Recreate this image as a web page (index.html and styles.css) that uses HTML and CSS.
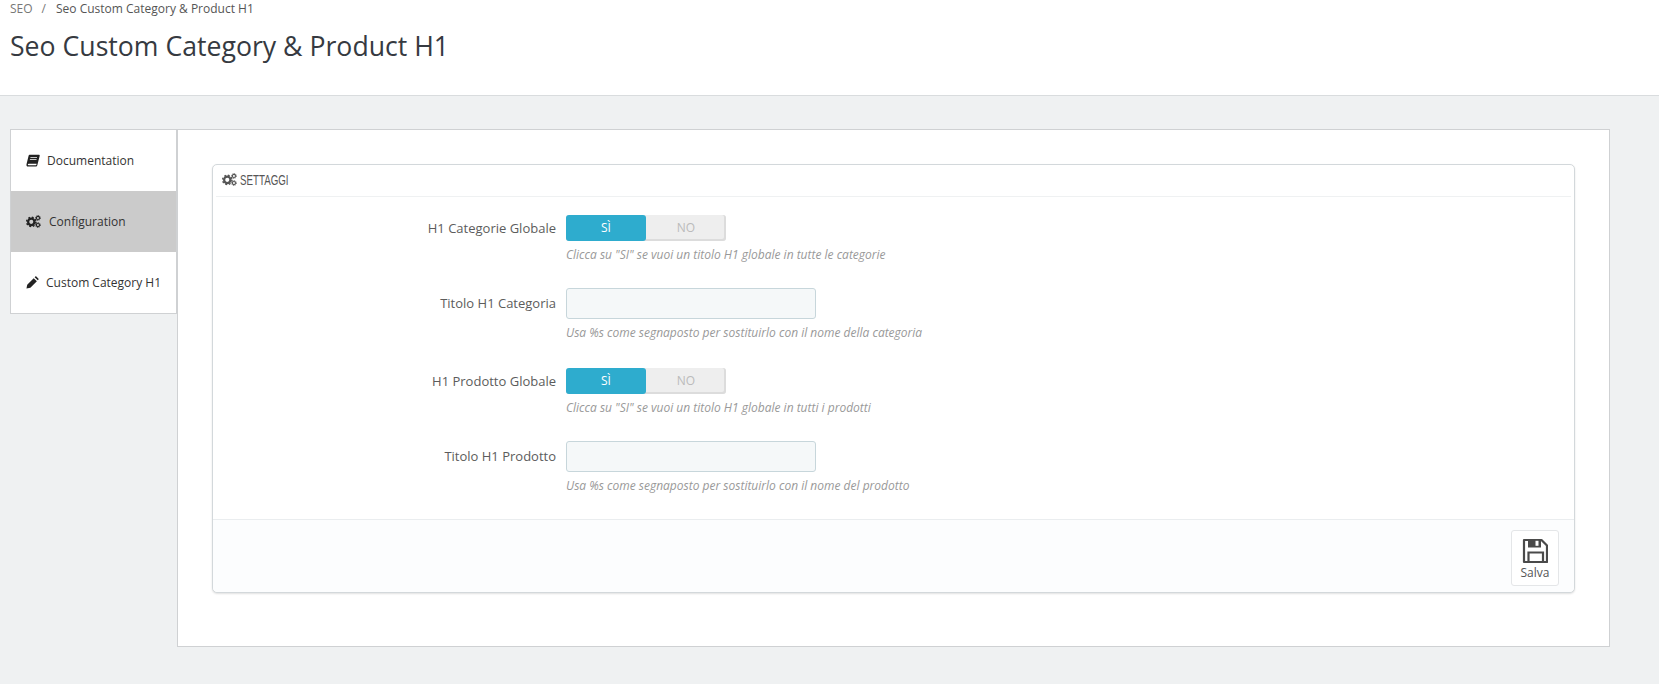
FILE: index.html
```html
<!DOCTYPE html>
<html lang="it">
<head>
<meta charset="utf-8">
<title>Seo Custom Category &amp; Product H1</title>
<link rel="stylesheet" href="styles.css">
</head>
<body>
<svg class="defs" width="0" height="0" aria-hidden="true">
  <symbol id="cogs" viewBox="0 0 16 14">
    <circle cx="5.6" cy="7.4" r="3.4" fill="none" stroke="currentColor" stroke-width="2.4"/>
    <circle cx="5.6" cy="7.4" r="5" fill="none" stroke="currentColor" stroke-width="1.6" stroke-dasharray="2 1.93"/>
    <circle cx="12.8" cy="3.2" r="1.7" fill="none" stroke="currentColor" stroke-width="1.2"/>
    <circle cx="12.8" cy="3.2" r="2.6" fill="none" stroke="currentColor" stroke-width="1" stroke-dasharray="1.1 0.94"/>
    <circle cx="12.8" cy="10.8" r="1.7" fill="none" stroke="currentColor" stroke-width="1.2"/>
    <circle cx="12.8" cy="10.8" r="2.6" fill="none" stroke="currentColor" stroke-width="1" stroke-dasharray="1.1 0.94"/>
  </symbol>
</svg>
<header class="page-head">
  <div class="crumbs"><span class="crumb-root">SEO</span><span class="crumb-sep">/</span><span class="crumb-cur">Seo Custom Category &amp; Product H1</span></div>
  <h1 class="title">Seo Custom Category &amp; Product H1</h1>
</header>
<div class="content">
  <nav class="tabs">
    <a class="tab">
      <svg class="tab-icon book" viewBox="0 0 14 14"><path fill="currentColor" fill-rule="evenodd" d="M3.6 .8H13.200l.6.8-2.500 9.600c-.2.8-.7 1.300-1.600 1.300H2c-1.100 0-1.800-.9-1.500-2.300L2.600 1.800c.1-.6.5-1 1-1zM4.500 3.200l-.2.8h6.600l.2-.8zM4 5.200l-.2.8h6.600l.2-.8zM2.700 9.800c-.6 0-.9.300-.9.700s.3.700.9.700h7.100c.3 0 .5-.2.6-.5l.2-.9z"/></svg>
      <span>Documentation</span>
    </a>
    <a class="tab active">
      <svg class="tab-icon cogs"><use href="#cogs"/></svg>
      <span>Configuration</span>
    </a>
    <a class="tab">
      <svg class="tab-icon pencil" viewBox="0 0 14 14"><path fill="currentColor" d="M8.300 2.300l3.400 3.400-7 7-4.200.8.800-4.200zM9.300 1.300l.6-.6c.4-.4 1-.4 1.400 0l2 2c.4.400.4 1 0 1.400l-.6.600z"/></svg>
      <span>Custom Category H1</span>
    </a>
  </nav>
  <main class="main">
    <section class="panel">
      <div class="panel-head"><svg class="head-icon"><use href="#cogs"/></svg><span class="head-text">SETTAGGI</span></div>
      <div class="form">
        <div class="row row-switch">
          <label class="label">H1 Categorie Globale</label>
          <div class="control">
            <div class="switch"><span class="on">SÌ</span><span class="off">NO</span></div>
            <p class="help">Clicca su "SI" se vuoi un titolo H1 globale in tutte le categorie</p>
          </div>
        </div>
        <div class="row row-input">
          <label class="label">Titolo H1 Categoria</label>
          <div class="control">
            <input class="text" type="text">
            <p class="help">Usa %s come segnaposto per sostituirlo con il nome della categoria</p>
          </div>
        </div>
        <div class="row row-switch">
          <label class="label">H1 Prodotto Globale</label>
          <div class="control">
            <div class="switch"><span class="on">SÌ</span><span class="off">NO</span></div>
            <p class="help">Clicca su "SI" se vuoi un titolo H1 globale in tutti i prodotti</p>
          </div>
        </div>
        <div class="row row-input row-last">
          <label class="label">Titolo H1 Prodotto</label>
          <div class="control">
            <input class="text" type="text">
            <p class="help">Usa %s come segnaposto per sostituirlo con il nome del prodotto</p>
          </div>
        </div>
      </div>
      <div class="panel-foot">
        <button class="save" type="button">
          <svg class="save-icon" viewBox="0 0 26 26"><path fill="none" stroke="currentColor" stroke-width="2.200" stroke-linejoin="round" d="M2 2h17.500L25 7.500V24H2z"/><path fill="currentColor" d="M6 1h13v8.500H6z"/><path fill="#fff" d="M13.500 2.800h3v5h-3z"/><path fill="none" stroke="currentColor" stroke-width="2.200" d="M6.500 24v-9.500h14.500V24"/></svg>
          <span>Salva</span>
        </button>
      </div>
    </section>
  </main>
</div>
</body>
</html>
```
FILE: styles.css
```css
* { box-sizing: border-box; }
html, body { margin: 0; padding: 0; }
body {
  height: 684px;
  overflow: hidden;
  background: #eff1f2;
  font-family: "Open Sans", "Liberation Sans", sans-serif;
  font-size: 12px;
  color: #555;
}
.defs { position: absolute; }
.page-head {
  height: 96px;
  background: #fff;
  border-bottom: 1px solid #d9dcde;
  padding: 0 10px;
}
.crumbs {
  display: flex;
  height: 18px;
  align-items: center;
  font-size: 12px;
  line-height: 18px;
  color: #555;
}
.crumb-root { color: #777; }
.crumb-sep { color: #777; margin: 0 10px 0 9px; }
.title {
  margin: 8px 0 0;
  font-size: 26.650px;
  line-height: 40px;
  font-weight: 400;
  color: #363a41;
}
.content {
  display: flex;
  align-items: flex-start;
  padding: 33px 0 0 10px;
}
.tabs {
  width: 167px;
  flex: none;
  background: #fff;
  border: 1px solid #cfd1d3;
  display: flex;
  flex-direction: column;
}
.tab {
  height: 61px;
  display: flex;
  align-items: center;
  padding-left: 15px;
  gap: 8px;
  color: #333;
  font-size: 12px;
}
.tab.active { background: #cbcbcb; }
.tab-icon { flex: none; color: #222; }
.book { width: 14px; height: 14px; margin-right: -1px; }
.cogs { width: 15px; height: 13px; }
.pencil { width: 13px; height: 13px; margin-right: -1px; }
.main {
  width: 1433px;
  height: 518px;
  flex: none;
  background: #fff;
  border: 1px solid #cfd1d3;
  padding: 34px 34px 0 34px;
}
.panel {
  width: 1363px;
  height: 429px;
  background: #fff;
  border: 1px solid #d3d8db;
  border-radius: 5px;
  box-shadow: 0 1px 2px rgba(0,0,0,.12);
  display: flex;
  flex-direction: column;
}
.panel-head {
  flex: none;
  height: 32px;
  margin: 0 3px;
  padding: 0 0 2px 6px;
  border-bottom: 1px solid #eff1f2;
  display: flex;
  align-items: center;
  gap: 3px;
  font-family: "Liberation Sans", sans-serif;
  font-size: 15px;
  color: #555;
}
.head-icon { width: 15px; height: 13px; color: #555; flex: none; }
.head-text { display: inline-block; transform: scaleX(.65); transform-origin: left center; }
.form { flex: none; height: 322px; padding-top: 18px; }
.row {
  display: grid;
  grid-template-columns: 343px 1fr;
  column-gap: 10px;
}
.row-switch { height: 73px; }
.row-input { height: 80px; }
.row-last { height: 77px; }
.label {
  text-align: right;
  font-size: 13px;
  color: #5c5c5c;
  line-height: 26px;
}
.row-input .label { line-height: 31px; }
.switch {
  width: 160px;
  height: 26px;
  display: flex;
  border-radius: 3px;
  background: #eeeeee;
  box-shadow: inset -1px -1px 0 1px #dcdcdc;
  line-height: 26px;
  text-align: center;
  font-size: 12px;
}
.on {
  width: 80px;
  background: #2eacce;
  color: #fff;
  border-radius: 3px;
}
.off { width: 80px; color: #bbb; }
.text {
  display: block;
  width: 250px;
  height: 31px;
  background: #f5f8f9;
  border: 1px solid #c7d6db;
  border-radius: 3px;
}
.help {
  margin: 5px 0 0;
  font-size: 12px;
  line-height: 18px;
  font-style: italic;
  color: #999;
}
.panel-foot {
  flex: none;
  height: 73px;
  background: #fcfdfe;
  border-top: 1px solid #eaedef;
  border-radius: 0 0 5px 5px;
  display: flex;
  justify-content: flex-end;
  padding: 10px 15px 0 0;
}
.save {
  width: 48px;
  height: 56px;
  padding: 7px 0 0;
  background: #fff;
  border: 1px solid #e4e6e8;
  border-radius: 3px;
  display: flex;
  flex-direction: column;
  align-items: center;
  font-family: inherit;
  font-size: 12px;
  line-height: 16px;
  color: #555;
}
.save-icon { width: 26px; height: 26px; color: #4a4a4a; margin-bottom: 1px; }
```
